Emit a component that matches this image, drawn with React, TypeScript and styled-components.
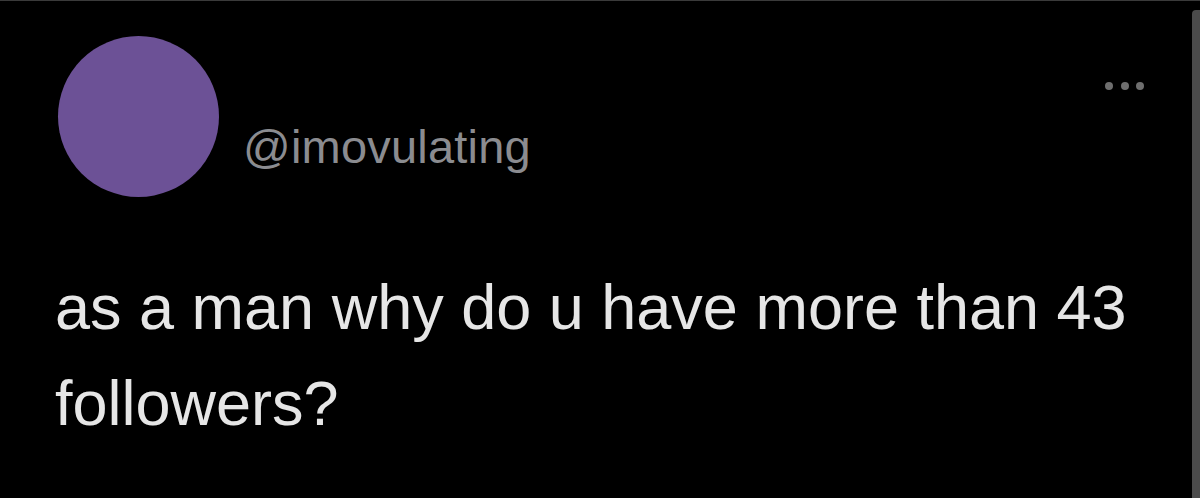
import styled, { createGlobalStyle } from 'styled-components';

const GlobalStyle = createGlobalStyle`
  html, body {
    margin: 0;
    padding: 0;
    background: #000;
  }
`;

const Page = styled.div`
  display: flex;
  width: 1200px;
  height: 498px;
  box-sizing: border-box;
  background: #000;
  border-top: 1px solid #3a3a3a;
  overflow: hidden;
  font-family: 'Liberation Sans', Arial, sans-serif;
`;

const Tweet = styled.div`
  flex: 1;
  display: flex;
  flex-direction: column;
  padding-left: 55px;
`;

const Header = styled.div`
  display: flex;
  align-items: flex-start;
`;

const Avatar = styled.div`
  width: 161px;
  height: 161px;
  margin-top: 35px;
  margin-left: 3px;
  border-radius: 50%;
  background: #6c5196;
  flex-shrink: 0;
`;

const Handle = styled.span`
  margin-top: 122px;
  margin-left: 24px;
  font-size: 47px;
  line-height: 1;
  color: #8b8c90;
  letter-spacing: 0.2px;
`;

const More = styled.div`
  display: flex;
  gap: 7.5px;
  margin-left: auto;
  margin-top: 81px;
  margin-right: 48px;
`;

const Dot = styled.span`
  width: 8px;
  height: 8px;
  border-radius: 50%;
  background: #6e6e6e;
`;

const Body = styled.p`
  margin: 62px 0 0;
  font-size: 63px;
  line-height: 96px;
  color: #e6e6e6;
`;

const Scrollbar = styled.div`
  width: 8px;
  margin-top: 9px;
  background: #4b4b4b;
  border-top-left-radius: 4px;
  flex-shrink: 0;
`;

export default function App() {
  return (
    <>
      <GlobalStyle />
      <Page>
        <Tweet>
          <Header>
            <Avatar />
            <Handle>@imovulating</Handle>
            <More>
              <Dot />
              <Dot />
              <Dot />
            </More>
          </Header>
          <Body>as a man why do u have more than 43 followers?</Body>
        </Tweet>
        <Scrollbar />
      </Page>
    </>
  );
}
